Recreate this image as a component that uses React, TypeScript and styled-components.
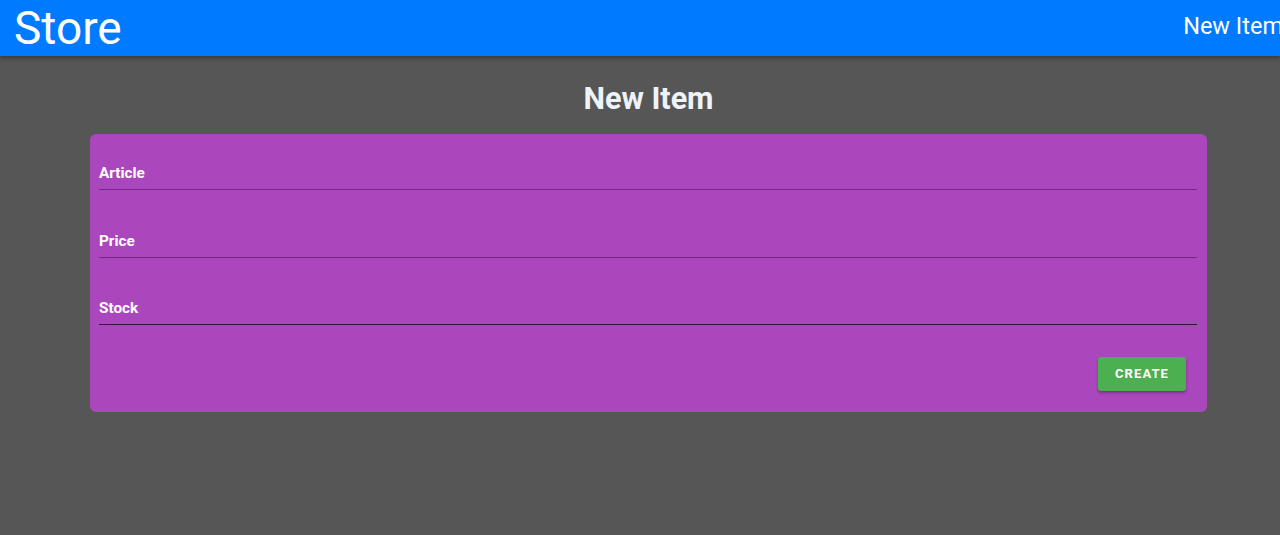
import React from "react";
import styled, { createGlobalStyle } from "styled-components";

const Global = createGlobalStyle`
  html, body { margin: 0; padding: 0; }
  body {
    background: #565656;
    font-family: Roboto, "Liberation Sans", sans-serif;
    min-height: 535px;
    overflow: hidden;
  }
`;

const Header = styled.header`
  height: 56px;
  background: #007bff;
  display: flex;
  align-items: center;
  justify-content: space-between;
  padding-left: 14px;
  box-shadow: 0 2px 4px rgba(0, 0, 0, 0.35);
  overflow: hidden;
  position: relative;
  z-index: 1;
`;

const Brand = styled.div`
  color: #ffffff;
  font-size: 46px;
  line-height: 56px;
  font-weight: 400;
`;

const NavLink = styled.div`
  align-self: flex-start;
  color: #ffffff;
  font-size: 23.5px;
  line-height: 52px;
  white-space: nowrap;
  margin-right: -3px;
`;

const Main = styled.main`
  display: flex;
  flex-direction: column;
  margin-left: 90px;
  width: 1117px;
`;

const Title = styled.h1`
  margin: 26px 0 18px;
  text-align: center;
  color: #eef3fa;
  font-size: 30.5px;
  line-height: 34px;
  font-weight: 700;
`;

const Card = styled.form`
  background: #ab47bc;
  border-radius: 6px;
  padding: 30px 10px 21px 9px;
  display: flex;
  flex-direction: column;
  gap: 42px;
`;

const Field = styled.label<{ $active?: boolean; $tight?: boolean }>`
  display: block;
  padding-bottom: 7px;
  margin-top: ${(p) => (p.$tight ? "-1px" : "0")};
  border-bottom: 1px solid ${(p) => (p.$active ? "#3a0f45" : "#7a2587")};
  color: #ffffff;
  font-size: 15.3px;
  line-height: 18px;
  font-weight: 700;
`;

const Actions = styled.div`
  display: flex;
  justify-content: flex-end;
  margin-top: -10px;
  padding-right: 11px;
`;

const Button = styled.button`
  width: 88px;
  height: 34px;
  border: none;
  border-radius: 3px;
  background: #4caf50;
  color: #ffffff;
  font-family: Roboto, "Liberation Sans", sans-serif;
  font-size: 13px;
  font-weight: 700;
  letter-spacing: 1.1px;
  line-height: 34px;
  padding: 0;
  box-shadow: 0 2px 3px rgba(0, 0, 0, 0.3);
  cursor: pointer;
`;

export default function App() {
  return (
    <>
      <Global />
      <Header>
        <Brand>Store</Brand>
        <NavLink>New Item</NavLink>
      </Header>
      <Main>
        <Title>New Item</Title>
        <Card onSubmit={(e) => e.preventDefault()}>
          <Field>Article</Field>
          <Field>Price</Field>
          <Field $active $tight>Stock</Field>
          <Actions>
            <Button type="submit">CREATE</Button>
          </Actions>
        </Card>
      </Main>
    </>
  );
}
